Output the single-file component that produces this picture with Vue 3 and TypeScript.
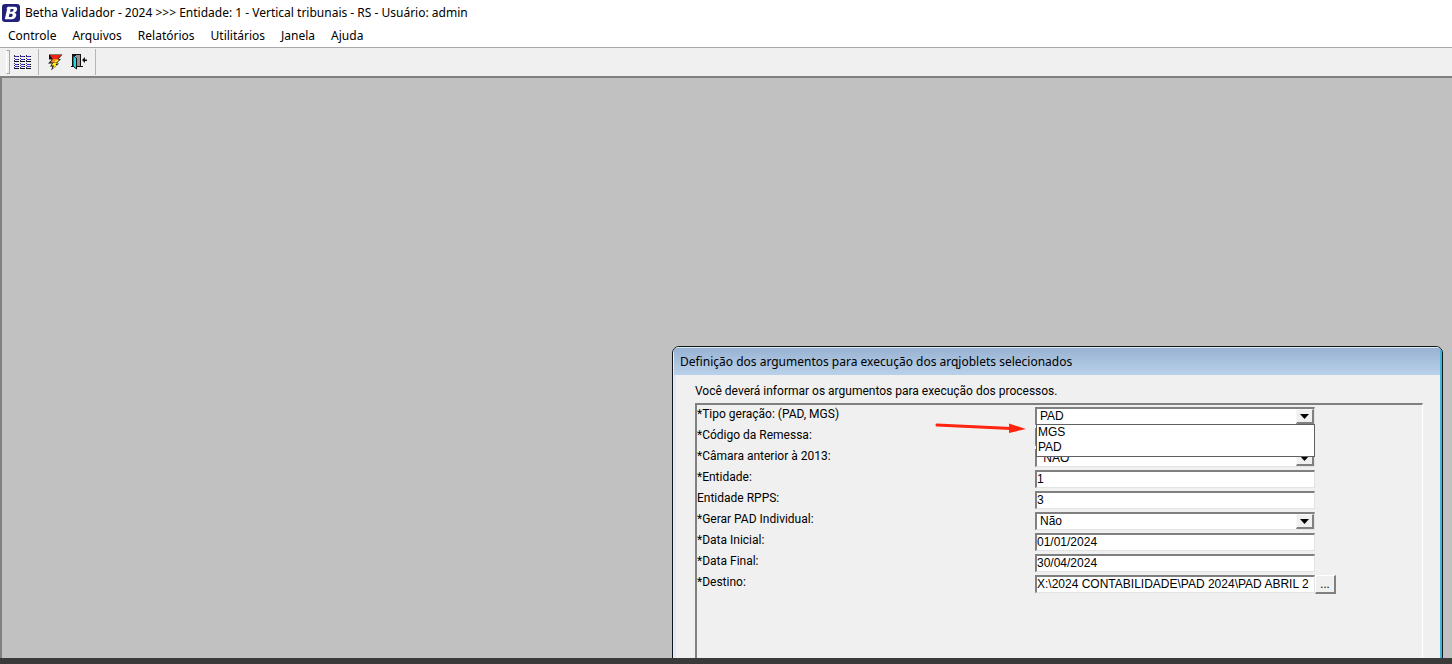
<script setup lang="ts">
import { ref } from 'vue'

interface Field {
  id: string
  label: string
  kind: 'text' | 'select'
  value: string
  options?: string[]
  open?: boolean
  browse?: boolean
}

const menus = ['Controle', 'Arquivos', 'Relatórios', 'Utilitários', 'Janela', 'Ajuda']

const fields = ref<Field[]>([
  { id: 'tipo', label: '*Tipo geração: (PAD, MGS)', kind: 'select', value: 'PAD', options: ['MGS', 'PAD'], open: true },
  { id: 'remessa', label: '*Código da Remessa:', kind: 'text', value: '' },
  { id: 'camara', label: '*Câmara anterior à 2013:', kind: 'select', value: '\u00a0NÃO', options: ['\u00a0NÃO', '\u00a0SIM'] },
  { id: 'entidade', label: '*Entidade:', kind: 'text', value: '1' },
  { id: 'rpps', label: 'Entidade RPPS:', kind: 'text', value: '3' },
  { id: 'individual', label: '*Gerar PAD Individual:', kind: 'select', value: 'Não', options: ['Não', 'Sim'] },
  { id: 'inicial', label: '*Data Inicial:', kind: 'text', value: '01/01/2024' },
  { id: 'final', label: '*Data Final:', kind: 'text', value: '30/04/2024' },
  { id: 'destino', label: '*Destino:', kind: 'text', value: 'X:\\2024 CONTABILIDADE\\PAD 2024\\PAD ABRIL 2', browse: true },
])

function pick(field: Field, option: string) {
  field.value = option
  field.open = false
}
</script>

<template>
  <div class="app">
    <header class="titlebar">
      <svg class="logo" width="18" height="18" viewBox="0 0 18 18" aria-hidden="true">
        <rect x="0" y="0" width="18" height="18" rx="3" fill="#23207c" />
        <g transform="translate(-1.500 -1.800) scale(1.2)">
          <path d="M6.2 3.8H11.6Q14.4 3.8 13.8 6.3Q13.4 8.1 11.6 8.7Q13.6 9.4 13 11.600Q12.3 14.200 9.4 14.200H3.6L5.6 5.2H4.6Z" fill="#fff" />
          <path d="M8.4 5.6H10.2Q11.2 5.6 10.9 6.8Q10.6 7.9 9.5 7.9H7.9ZM7.5 9.6H9.3Q10.4 9.6 10.1 11Q9.8 12.3 8.6 12.3H6.9Z" fill="#23207c" />
        </g>
      </svg>
      <h1>Betha Validador - 2024 &gt;&gt;&gt; Entidade: 1 - Vertical tribunais - RS - Usuário: admin</h1>
    </header>

    <nav class="menubar" aria-label="Menu principal">
      <button v-for="m in menus" :key="m" type="button">{{ m }}</button>
    </nav>

    <div class="toolbar" role="toolbar" aria-label="Ferramentas">
      <span class="grip"></span>
      <button type="button" aria-label="Arquivos">
        <svg width="17" height="15" viewBox="0 0 17 15" shape-rendering="crispEdges">
          <g v-for="x in [0, 6, 12]" :key="x" :transform="`translate(${x} 0)`">
            <path d="M0 0h1v2H0zM0 3h1v1H0zM0 5h1v2H0zM0 8h1v1H0zM0 10h1v1H0zM0 12h1v2H0z" fill="#2b2850" />
            <path d="M1 1h3v1H1zM1 4h3v1H1zM1 9h3v1H1zM1 11h3v1H1z" fill="#4426f2" />
            <path d="M1 6h4v1H1zM1 13h4v1H1zM4 1h1v1H4zM4 4h1v1H4zM4 9h1v1H4zM4 11h1v1H4z" fill="#0c0c18" />
          </g>
        </svg>
      </button>
      <span class="rule"></span>
      <button type="button" aria-label="Executar">
        <svg width="16" height="17" viewBox="0 0 16 17">
          <path d="M2 0.500H15.500L11.500 5H14L9.500 9.500H12L4 16.500L5.500 12.500H3L5 9.500H1L5 5.500H2Z" fill="#111" />
          <path d="M3 1H14.500L10.500 5H5.500Z" fill="#f02414" />
          <path d="M6 5H12L9 8.500H3.500Z" fill="#ff8a17" />
          <path d="M6 9H10L8.500 11H10L5.500 15L7 11.500H4.500Z" fill="#ffed22" />
          <path d="M9 6H12L9.500 8.500H7Z" fill="#ffed22" />
        </svg>
      </button>
      <button type="button" aria-label="Sair">
        <svg width="17" height="16" viewBox="0 0 17 16">
          <path d="M0 12H3V13H0ZM9 12H12V13H9Z" fill="#111" />
          <path d="M1 0H10V13H6V2H3V12H1Z" fill="#111" />
          <path d="M5 1H9V12H5Z" fill="#929292" />
          <path d="M2 1.500L5.500 4V15L2 12Z" fill="#24dcdf" stroke="#111" stroke-width="1" />
          <path d="M11 6L14 3V5.500H16V7H14V9Z" fill="#111" />
        </svg>
      </button>
      <span class="rule end"></span>
    </div>

    <main class="workspace">
      <section class="dialog" role="dialog" aria-labelledby="dialog-title">
        <h2 id="dialog-title">Definição dos argumentos para execução dos arqjoblets selecionados</h2>
        <div class="body">
          <p>Você deverá informar os argumentos para execução dos processos.</p>
          <form class="panel" @submit.prevent>
            <div v-for="f in fields" :key="f.id" class="row">
              <label :for="f.id">{{ f.label }}</label>
              <div class="control">
                <template v-if="f.kind === 'select'">
                  <select :id="f.id" v-model="f.value">
                    <option v-for="o in f.options" :key="o" :value="o">{{ o }}</option>
                  </select>
                  <span class="arrow" aria-hidden="true">
                    <svg width="9" height="5" viewBox="0 0 9 5"><path d="M0 0H9L4.500 5Z" fill="#000" /></svg>
                  </span>
                  <ul v-if="f.open" class="list" role="listbox" :aria-label="f.label">
                    <li v-for="o in f.options" :key="o" role="option" :aria-selected="o === f.value" @click="pick(f, o)">{{ o }}</li>
                  </ul>
                </template>
                <input v-else :id="f.id" v-model="f.value" type="text" />
              </div>
              <button v-if="f.browse" type="button" class="browse" aria-label="Procurar destino">...</button>
            </div>
            <svg class="pointer" width="92" height="12" viewBox="0 0 92 12" aria-hidden="true">
              <path d="M2 3L76 6.500" stroke="#ff2410" stroke-width="3" stroke-linecap="round" />
              <path d="M74 1.500L91 7L74 11Z" fill="#ff2410" />
            </svg>
          </form>
        </div>
      </section>
    </main>
    <footer class="taskbar"></footer>
  </div>
</template>

<style>
body {
  margin: 0;
}
</style>

<style scoped>
* {
  box-sizing: border-box;
}

.app {
  display: flex;
  flex-direction: column;
  height: 100vh;
  overflow: hidden;
  background: #fff;
  color: #000;
  font: 12px/16px "Noto Sans", "Open Sans", sans-serif;
}

button {
  padding: 0;
  border: 0;
  background: none;
  color: inherit;
  font: inherit;
}

h1,
h2,
p,
ul {
  margin: 0;
  padding: 0;
  font: inherit;
  white-space: nowrap;
}

.titlebar {
  display: flex;
  align-items: center;
  gap: 5px;
  height: 25px;
  padding-left: 2px;
}

.menubar {
  display: flex;
  gap: 16px;
  height: 22px;
  padding-left: 8px;
}

.toolbar {
  display: flex;
  align-items: center;
  height: 29px;
  padding-left: 6px;
  border-top: 1px solid #a9a9a9;
  background: #f0f0f0;
}

.toolbar button {
  display: flex;
  align-items: center;
  justify-content: center;
  width: 25px;
  height: 24px;
}

.grip {
  width: 4px;
  height: 24px;
  border: 1px solid #a5a5a5;
  border-left-color: #fff;
}

.rule {
  width: 1px;
  height: 26px;
  margin: 0 3px;
  background: #b5b5b5;
}

.workspace {
  position: relative;
  flex: 1;
  overflow: hidden;
  border-top: 2px solid #808080;
  border-left: 2px solid #808080;
  background: #c1c1c1;
}

.dialog {
  position: absolute;
  top: 268px;
  right: 9px;
  bottom: -10px;
  width: 771px;
  display: flex;
  flex-direction: column;
  border: 1px solid #101418;
  border-radius: 7px 7px 0 0;
  background: #f0f0f0;
  box-shadow: inset 1px 1px #e4f2fc, inset -2px 0 #44b4dc;
  overflow: hidden;
}

.dialog h2 {
  height: 28px;
  margin: 0 2px 0 1px;
  padding: 6px 0 0 6px;
  border-top: 1px solid #d9eaf5;
  background: linear-gradient(#98b2d2, #b9d1ea);
  line-height: 16px;
}

.body {
  flex: 1;
  display: flex;
  flex-direction: column;
  margin: 0 2px 0 1px;
  padding: 9px 17px 0 19px;
  border-left: 2px solid #dce8f5;
  font: 12px/15px Roboto, "Liberation Sans", sans-serif;
}

.body p {
  padding-bottom: 4px;
}

.panel {
  position: relative;
  flex: 1;
  padding-top: 2px;
  border: 2px solid #808080;
  border-right: 1px solid #fff;
  border-bottom: 0;
}

.row {
  display: grid;
  grid-template-columns: 338px 280px 21px;
  align-items: start;
  height: 21px;
}

.row label {
  white-space: nowrap;
}

.control {
  position: relative;
  height: 18px;
  font-family: "Liberation Sans", Arial, sans-serif;
}

.control input,
.control select {
  display: block;
  width: 100%;
  height: 18px;
  margin: 0;
  border: 2px solid #808080;
  border-right: 1px solid #e3e3e3;
  border-bottom: 1px solid #e3e3e3;
  border-radius: 0;
  outline: 0;
  background: #fff;
  color: #000;
  font: inherit;
  appearance: none;
}

.control input {
  padding: 0 0 2px;
}

.control select {
  padding: 0 20px 0 3px;
}

.arrow {
  position: absolute;
  top: 2px;
  right: 1px;
  display: flex;
  align-items: center;
  justify-content: center;
  width: 18px;
  height: 15px;
  border: 1px solid #f8f8f8;
  border-right: 2px solid #808080;
  border-bottom: 2px solid #808080;
  background: #f0f0f0;
  pointer-events: none;
}

.list {
  position: absolute;
  z-index: 1;
  top: 17px;
  left: 1px;
  right: 0;
  padding: 0 0 1px 1px;
  border: 1px solid #606060;
  background: #fff;
  line-height: 15px;
  list-style: none;
}

.browse {
  height: 19px;
  border: 1px solid #fff;
  border-right: 2px solid #808080;
  border-bottom: 2px solid #808080;
  background: #f0f0f0;
  line-height: 15px;
}

.pointer {
  position: absolute;
  top: 17px;
  left: 238px;
}

.taskbar {
  height: 6px;
  background: #3a3a3b;
}
</style>
